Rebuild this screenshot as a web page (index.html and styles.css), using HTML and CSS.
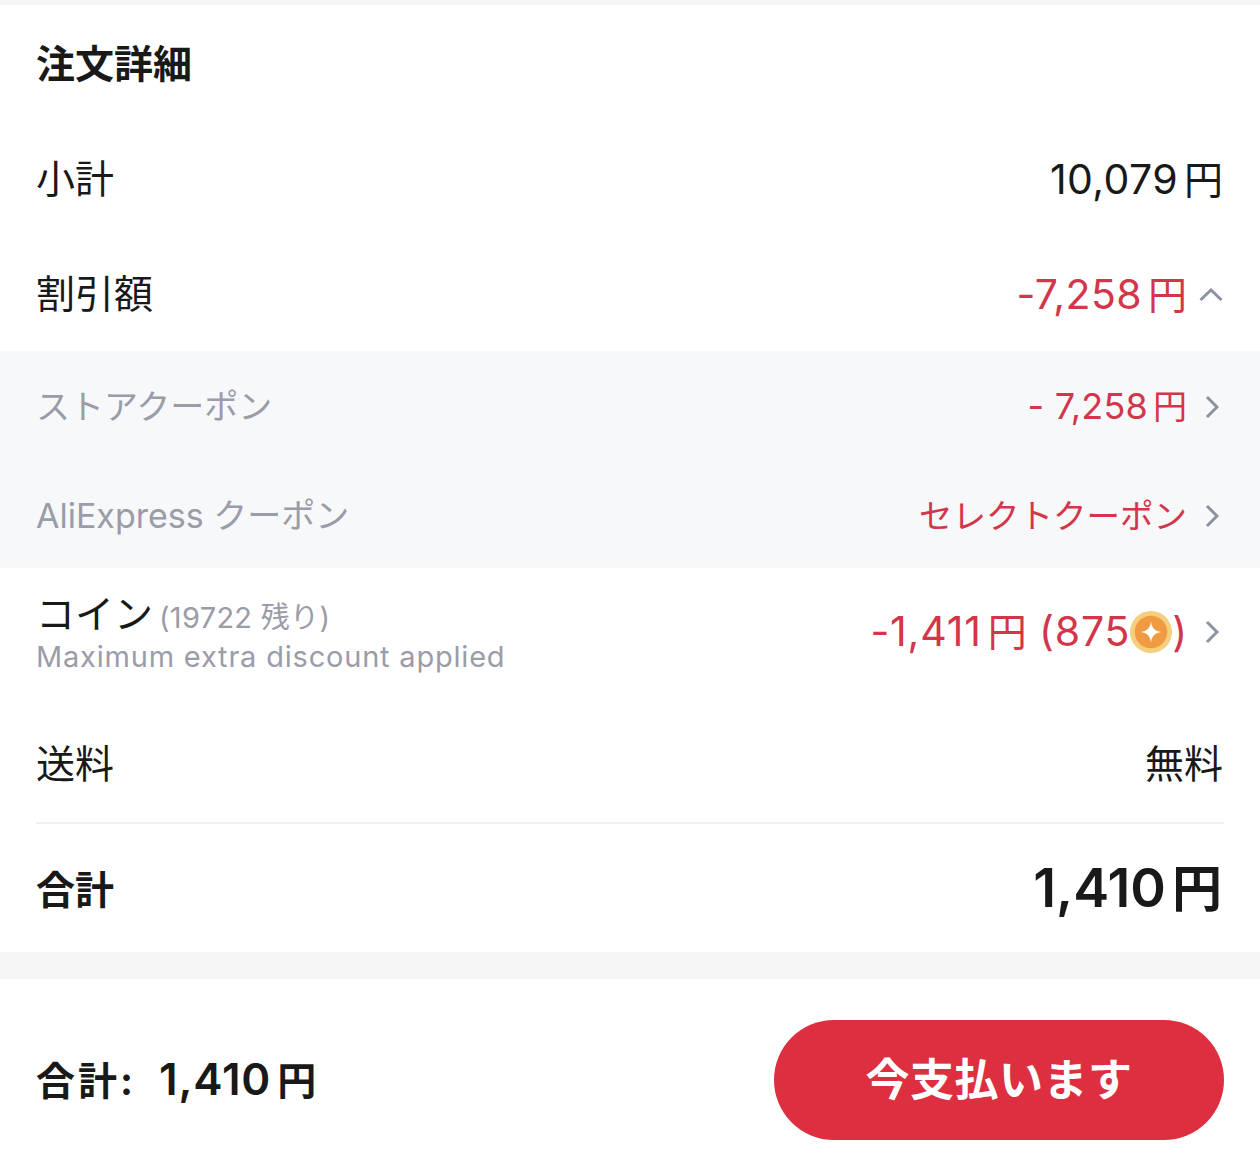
FILE: index.html
```html
<!DOCTYPE html>
<html lang="ja">
<head>
    <meta charset="UTF-8">
    <meta name="viewport" content="width=device-width, initial-scale=1.0">
    <title>注文詳細</title>
    <link rel="stylesheet" href="styles.css">
</head>
<body>
    <div class="top-strip"></div>

    <section class="details">
        <h2 class="details-title">注文詳細</h2>

        <div class="row row-subtotal">
            <div class="label">小計</div>
            <div class="value value-plain"><span>10,079<span class="yen">円</span></span></div>
        </div>

        <div class="row row-discount">
            <div class="label">割引額</div>
            <div class="value red">
                <span>-7,258<span class="yen">円</span></span>
                <svg class="chev chev-up" viewBox="0 0 24 14"><path d="M1.5 12 L12 2 L22.5 12"/></svg>
            </div>
        </div>

        <div class="sub-list">
            <div class="sub-row">
                <div class="sub-label">ストアクーポン</div>
                <div class="sub-value red">
                    <span>- 7,258<span class="yen">円</span></span>
                    <svg class="chev" viewBox="0 0 14 24"><path d="M2 2 L12 12 L2 22"/></svg>
                </div>
            </div>
            <div class="sub-row">
                <div class="sub-label">AliExpress クーポン</div>
                <div class="sub-value red">
                    <span class="select-coupon">セレクトクーポン</span>
                    <svg class="chev" viewBox="0 0 14 24"><path d="M2 2 L12 12 L2 22"/></svg>
                </div>
            </div>
        </div>

        <div class="row row-coin">
            <div class="coin-text">
                <div class="label">コイン <span class="coin-left">(19722 残り)</span></div>
                <div class="coin-note">Maximum extra discount applied</div>
            </div>
            <div class="value red">
                <span>-1,411<span class="yen">円</span> (875</span>
                <svg class="coin" viewBox="0 0 44 44">
                    <circle cx="22" cy="22" r="22" fill="#f3cf7e"/>
                    <circle cx="22" cy="22" r="17" fill="#f09a41"/>
                    <path d="M22 11 C23 18 26 21 33 22 C26 23 23 26 22 33 C21 26 18 23 11 22 C18 21 21 18 22 11 Z" fill="#fff"/>
                </svg>
                <span>)</span>
                <svg class="chev chev-gap" viewBox="0 0 14 24"><path d="M2 2 L12 12 L2 22"/></svg>
            </div>
        </div>

        <div class="row row-shipping">
            <div class="label">送料</div>
            <div class="label shipping-value">無料</div>
        </div>

        <div class="row row-total">
            <div class="label">合計</div>
            <div class="total-value">1,410<span class="yen">円</span></div>
        </div>
    </section>

    <div class="divider-band"></div>

    <footer class="pay-bar">
        <div class="pay-total"><span class="pay-label">合計:</span>1,410<span class="yen">円</span></div>
        <button class="pay-button">今支払います</button>
    </footer>
</body>
</html>
```

FILE: styles.css
```css
body {
    font-family: "Inter", "Noto Sans CJK JP", sans-serif;
    background-color: #fff;
    color: #191919;
    margin: 0;
    padding: 0;
    width: 1260px;
    height: 1176px;
    overflow: hidden;
}

.top-strip {
    height: 5px;
    background-color: #f5f5f5;
}

.details-title {
    margin: 0;
    padding: 0 36px;
    height: 116px;
    line-height: 118px;
    font-size: 39px;
    font-weight: 700;
}

.row {
    display: flex;
    justify-content: space-between;
    align-items: center;
    margin: 0 36px;
}

.label {
    font-size: 39px;
    font-weight: 400;
    line-height: 50px;
    margin-top: -1px;
}

.value {
    display: flex;
    align-items: center;
    font-size: 41px;
    line-height: 50px;
    letter-spacing: 0.4px;
    margin-top: 1px;
}

.value-plain {
    margin-right: 1px;
}

.yen {
    margin-left: 6px;
    font-size: 39px;
    letter-spacing: 0;
}

.red {
    color: #d3354a;
}

.row-subtotal {
    height: 116px;
}

.row-discount {
    height: 114px;
}

.sub-list {
    background-color: #f7f8fa;
    height: 217px;
}

.sub-row {
    display: flex;
    justify-content: space-between;
    align-items: center;
    padding: 0 36px;
    height: 109px;
}

.sub-label {
    font-size: 34px;
    line-height: 44px;
    margin-top: 2px;
    color: #9a9ca8;
}

.sub-value {
    display: flex;
    align-items: center;
    font-size: 36px;
    line-height: 44px;
    letter-spacing: 0.2px;
    margin-top: 2px;
}

.sub-value .yen {
    font-size: 34px;
    margin-left: 5px;
}

.select-coupon {
    font-size: 33.5px;
    letter-spacing: 0;
}

.chev {
    flex: none;
    width: 14px;
    height: 24px;
    margin-left: 18px;
    margin-right: 5px;
    fill: none;
    stroke: #8c92a0;
    stroke-width: 3;
}

.chev-up {
    width: 24px;
    height: 14px;
    margin-left: 12px;
    margin-right: 1px;
}

.chev-gap {
    margin-left: 17px;
}

.row-coin {
    height: 130px;
}

.row-coin .value {
    letter-spacing: 0.8px;
    margin-top: -3px;
}

.coin-text {
    margin-top: 0;
}

.coin-text .label {
    line-height: 44px;
    margin-top: -1px;
}

.coin-left {
    font-size: 29px;
    color: #9a9ca8;
    margin-left: -5px;
    letter-spacing: 0.3px;
}

.coin-note {
    font-size: 29px;
    line-height: 34px;
    color: #9a9ca8;
    letter-spacing: 0.8px;
}

.coin {
    flex: none;
    width: 42px;
    height: 42px;
}

.row-shipping {
    height: 124px;
    border-bottom: 2px solid #f0f0f0;
}

.row-shipping .label {
    margin-top: 7px;
}

.shipping-value {
    margin-right: 1px;
}

.row-total {
    height: 128px;
}

.row-total .label {
    font-weight: 700;
    margin-top: 3px;
}

.total-value {
    font-size: 54px;
    line-height: 60px;
    font-weight: 600;
    margin-top: 1px;
    margin-right: 2px;
}

.total-value .yen {
    font-size: 50px;
    margin-left: 6px;
}

.divider-band {
    height: 27px;
    background-color: #f5f5f5;
}

.pay-bar {
    display: flex;
    justify-content: space-between;
    align-items: center;
    height: 202px;
    padding: 0 36px;
}

.pay-total {
    font-size: 44px;
    line-height: 50px;
    font-weight: 600;
    letter-spacing: 0.8px;
    margin-top: 0;
}

.pay-total .yen {
    font-size: 39px;
    margin-left: 6px;
}

.pay-label {
    display: inline-block;
    width: 123px;
    font-size: 39px;
    font-weight: 700;
    letter-spacing: 3px;
}

.pay-button {
    width: 450px;
    height: 120px;
    background-color: #dd2f3f;
    color: #fff;
    border: none;
    border-radius: 60px;
    font-family: inherit;
    font-size: 44px;
    line-height: 50px;
    font-weight: 700;
    letter-spacing: 0.5px;
    padding: 0;
}
```
